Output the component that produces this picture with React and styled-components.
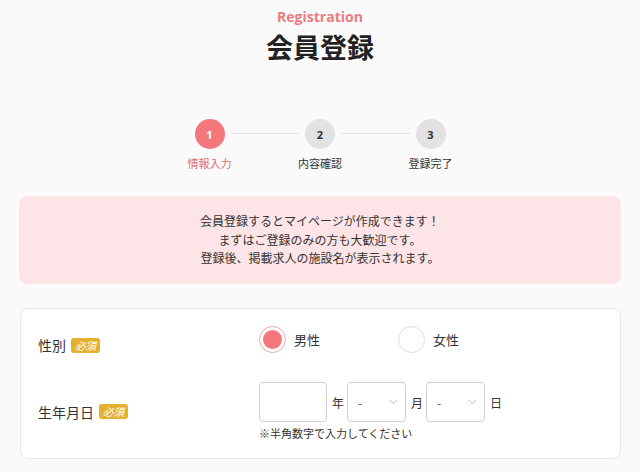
import React, { useState } from "react";
import styled, { createGlobalStyle } from "styled-components";

const GlobalStyle = createGlobalStyle`
  body {
    margin: 0;
    background: #fafafa;
    font-family: "Noto Sans CJK JP", "Noto Sans", sans-serif;
    color: #333;
  }
`;

const Page = styled.div`
  width: 640px;
  padding: 8px 19px 14px;
  box-sizing: border-box;
`;

const Eyebrow = styled.div`
  text-align: center;
  font-family: "Open Sans", "Noto Sans", sans-serif;
  font-weight: 700;
  font-size: 14px;
  line-height: 17px;
  color: #ec7c7f;
`;

const Title = styled.h1`
  margin: 4px 0 0;
  text-align: center;
  font-size: 27px;
  line-height: 36px;
  font-weight: 700;
  color: #222;
`;

const Steps = styled.div`
  display: flex;
  width: 251px;
  margin: 54px auto 0;
`;

const Step = styled.div`
  display: flex;
  flex-direction: column;
  align-items: center;
  width: 30px;
`;

const Circle = styled.div`
  width: 30px;
  height: 30px;
  flex-shrink: 0;
  border-radius: 50%;
  display: flex;
  align-items: center;
  justify-content: center;
  font-family: "Open Sans", "Noto Sans", sans-serif;
  font-weight: 700;
  font-size: 11px;
  color: ${(p) => (p.$active ? "#fff" : "#333")};
  background: ${(p) => (p.$active ? "#f4777e" : "#e2e2e2")};
`;

const StepLabel = styled.div`
  margin-top: 7px;
  white-space: nowrap;
  font-size: 11px;
  line-height: 15px;
  color: ${(p) => (p.$active ? "#e06b72" : "#333")};
`;

const Connector = styled.div`
  flex: 1;
  height: 1px;
  margin: 14px 6px 0;
  background: #e3e3e3;
`;

const Notice = styled.div`
  margin-top: 25px;
  height: 88px;
  box-sizing: border-box;
  display: flex;
  flex-direction: column;
  justify-content: center;
  align-items: center;
  background: #fde4e7;
  border-radius: 8px;
  font-size: 12px;
  line-height: 18.5px;
  color: #333;
`;

const Card = styled.div`
  margin: 24px 0 0 1px;
  background: #fff;
  border: 1px solid #e8e8e8;
  border-radius: 8px;
  padding: 17px;
  display: flex;
  flex-direction: column;
  gap: 18px;
`;

const Row = styled.div`
  display: grid;
  grid-template-columns: 221px 1fr;
  align-items: center;
`;

const Label = styled.div`
  display: flex;
  align-items: center;
  gap: 5px;
  font-size: 14px;
  color: #333;
`;

const Badge = styled.span`
  display: inline-flex;
  align-items: center;
  justify-content: center;
  padding: 0 4px;
  height: 15px;
  border-radius: 3px;
  background: #e4b12e;
  color: #fff;
  font-size: 10.5px;
  font-style: italic;
`;

const RadioGroup = styled.div`
  display: flex;
  padding-bottom: 11px;
`;

const RadioOption = styled.label`
  width: 139px;
  display: flex;
  align-items: center;
  gap: 8px;
  font-size: 13px;
  color: #333;
  cursor: pointer;
`;

const RadioMark = styled.span`
  width: 27px;
  height: 27px;
  box-sizing: border-box;
  border-radius: 50%;
  border: 1px solid ${(p) => (p.$checked ? "#e7a9ab" : "#dcdcdc")};
  background: #fff;
  display: flex;
  align-items: center;
  justify-content: center;
  &::after {
    content: "";
    width: 19px;
    height: 19px;
    border-radius: 50%;
    background: ${(p) => (p.$checked ? "#f4777e" : "transparent")};
  }
`;

const DateBlock = styled.div`
  display: flex;
  flex-direction: column;
`;

const DateRow = styled.div`
  display: flex;
  align-items: center;
`;

const YearInput = styled.input`
  width: 68px;
  height: 40px;
  box-sizing: border-box;
  border: 1px solid #cfcfcf;
  border-radius: 4px;
  background: #fff;
  padding: 0 8px;
  font-size: 13px;
  font-family: inherit;
`;

const Unit = styled.span`
  font-size: 12px;
  color: #333;
  margin: 0 3px 0 5px;
`;

const SelectBox = styled.div`
  position: relative;
  width: 59px;
  height: 40px;
`;

const Select = styled.select`
  appearance: none;
  width: 100%;
  height: 100%;
  box-sizing: border-box;
  border: 1px solid #cfcfcf;
  border-radius: 4px;
  background: #fff;
  padding: 0 0 0 10px;
  font-size: 12px;
  font-family: inherit;
  color: #555;
`;

const Chevron = styled.svg`
  position: absolute;
  right: 8px;
  top: 17px;
  pointer-events: none;
`;

const Note = styled.div`
  margin-top: 4px;
  font-size: 11px;
  line-height: 15px;
  color: #333;
`;

const DateSelect = ({ options }) => (
  <SelectBox>
    <Select defaultValue="-">
      <option value="-">-</option>
      {options.map((o) => (
        <option key={o} value={o}>{o}</option>
      ))}
    </Select>
    <Chevron width="9" height="6" viewBox="0 0 9 6">
      <path d="M1 1l3.5 3.5L8 1" fill="none" stroke="#c4c4c4" strokeWidth="1" />
    </Chevron>
  </SelectBox>
);

const steps = ["情報入力", "内容確認", "登録完了"];

const App = () => {
  const [gender, setGender] = useState("male");
  const months = Array.from({ length: 12 }, (_, i) => i + 1);
  const days = Array.from({ length: 31 }, (_, i) => i + 1);

  return (
    <Page>
      <GlobalStyle />
      <Eyebrow>Registration</Eyebrow>
      <Title>会員登録</Title>

      <Steps>
        {steps.map((s, i) => (
          <React.Fragment key={s}>
            {i > 0 && <Connector />}
            <Step>
              <Circle $active={i === 0}>{i + 1}</Circle>
              <StepLabel $active={i === 0}>{s}</StepLabel>
            </Step>
          </React.Fragment>
        ))}
      </Steps>

      <Notice>
        <div>会員登録するとマイページが作成できます！</div>
        <div>まずはご登録のみの方も大歓迎です。</div>
        <div>登録後、掲載求人の施設名が表示されます。</div>
      </Notice>

      <Card>
        <Row>
          <Label>性別<Badge>必須</Badge></Label>
          <RadioGroup>
            <RadioOption onClick={() => setGender("male")}>
              <RadioMark $checked={gender === "male"} />男性
            </RadioOption>
            <RadioOption onClick={() => setGender("female")}>
              <RadioMark $checked={gender === "female"} />女性
            </RadioOption>
          </RadioGroup>
        </Row>
        <Row>
          <Label>生年月日<Badge>必須</Badge></Label>
          <DateBlock>
            <DateRow>
              <YearInput type="text" />
              <Unit>年</Unit>
              <DateSelect options={months} />
              <Unit>月</Unit>
              <DateSelect options={days} />
              <Unit>日</Unit>
            </DateRow>
            <Note>※半角数字で入力してください</Note>
          </DateBlock>
        </Row>
      </Card>
    </Page>
  );
};

export default App;
